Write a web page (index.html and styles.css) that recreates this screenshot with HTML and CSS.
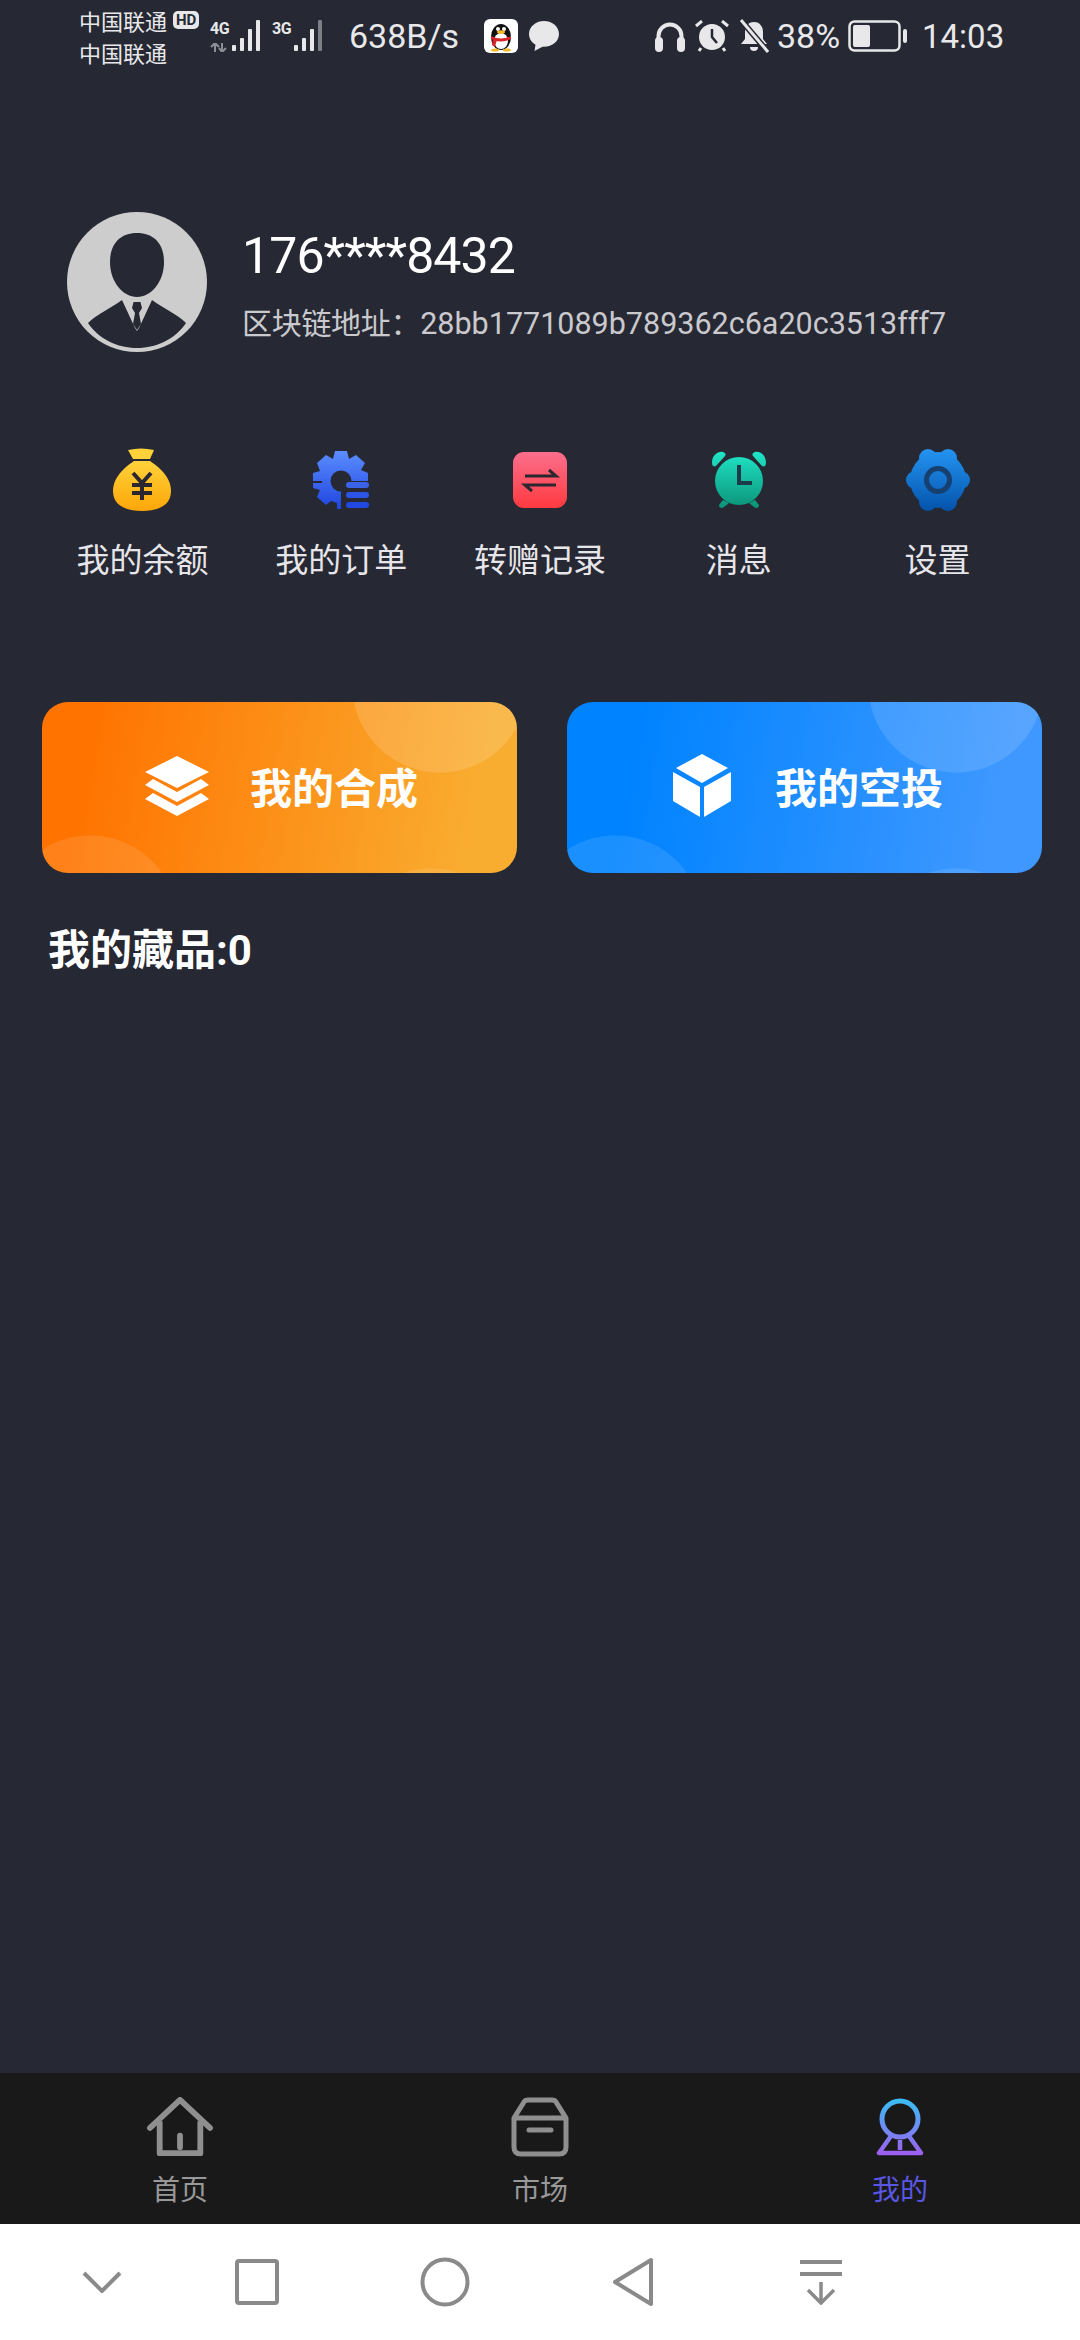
FILE: index.html
```html
<!DOCTYPE html>
<html lang="zh-CN">
<head>
    <meta charset="UTF-8">
    <meta name="viewport" content="width=device-width, initial-scale=1.0">
    <title>我的</title>
    <link rel="stylesheet" href="styles.css">
</head>
<body>
    <div class="status-bar">
        <div class="carrier">
            <div class="carrier-line">中国联通<span class="hd">HD</span></div>
            <div class="carrier-line">中国联通</div>
        </div>
        <div class="net net-4g">
            <div class="net-tag">
                <span class="net-label">4G</span>
                <svg width="18" height="9" viewBox="0 0 18 9"><path d="M5 9V1M1 4L5 0L9 4M12 0V8M9 5L12 9L16 5" fill="none" stroke="#8d8e96" stroke-width="2"/></svg>
            </div>
            <svg width="32" height="34" viewBox="0 0 32 34"><g fill="#e8e8ea"><rect x="0" y="26" width="4" height="6" rx="1"/><rect x="8" y="19" width="4" height="13" rx="1"/><rect x="16" y="10" width="4" height="22" rx="1"/><rect x="24" y="1" width="4" height="31" rx="1"/></g></svg>
        </div>
        <div class="net net-3g">
            <div class="net-tag">
                <span class="net-label">3G</span>
            </div>
            <svg width="32" height="34" viewBox="0 0 32 34"><g fill="#e8e8ea"><rect x="0" y="26" width="4" height="6" rx="1"/><rect x="8" y="19" width="4" height="13" rx="1"/><rect x="16" y="10" width="4" height="22" rx="1"/><rect x="24" y="1" width="4" height="31" rx="1" opacity="0.45"/></g></svg>
        </div>
        <span class="speed">638B/s</span>
        <svg class="qq" width="34" height="34" viewBox="0 0 34 34">
            <rect width="34" height="34" rx="6" fill="#fff"/>
            <ellipse cx="17" cy="18" rx="10" ry="13" fill="#111"/>
            <ellipse cx="17" cy="22" rx="7" ry="8" fill="#fff"/>
            <circle cx="14" cy="10" r="2" fill="#fff"/><circle cx="20" cy="10" r="2" fill="#fff"/>
            <ellipse cx="17" cy="13" rx="4" ry="1.8" fill="#f5b921"/>
            <path d="M7 17 Q17 22 27 17 L27 20 Q17 25 7 20Z M9 20 L13 20 L11 28 L8 26Z" fill="#d8232a"/>
            <ellipse cx="11" cy="31" rx="4" ry="1.6" fill="#f5b921"/><ellipse cx="23" cy="31" rx="4" ry="1.6" fill="#f5b921"/>
        </svg>
        <svg class="bubble" width="32" height="32" viewBox="0 0 32 32"><path d="M16 1C7.500 1 1 7 1 14c0 4.500 2.600 8.300 6.500 10.700L6.500 31l8-4.300c.5 0 1 .1 1.500 .1 8.500 0 15-5.700 15-12.800S24.500 1 16 1z" fill="#e8e8ea"/></svg>

        <div class="status-right">
            <svg class="s-head" width="30" height="31" viewBox="0 0 30 31"><path d="M3.500 19V15a11.500 11.500 0 0 1 23 0v4" fill="none" stroke="#e8e8ea" stroke-width="4"/><rect x="0" y="16" width="8" height="15" rx="4" fill="#e8e8ea"/><rect x="22" y="16" width="8" height="15" rx="4" fill="#e8e8ea"/></svg>
            <svg class="s-alarm" width="34" height="32" viewBox="0 0 34 32"><circle cx="17" cy="17" r="13" fill="#e8e8ea"/><path d="M17 9v8l5 6" fill="none" stroke="#262833" stroke-width="2.500"/><path d="M1 6l6-5M33 6l-6-5M6 28l-2 3M28 28l2 3" stroke="#e8e8ea" stroke-width="3" fill="none"/></svg>
            <svg class="s-bell" width="30" height="34" viewBox="0 0 30 34"><path d="M15 3c-6 0-9 5-9 10v7l-4 5h26l-4-5v-7c0-5-3-10-9-10z" fill="#e8e8ea"/><path d="M11 28a4 4 0 0 0 8 0z" fill="#e8e8ea"/><path d="M2 1l26 31" stroke="#262833" stroke-width="6"/><path d="M2 1l27 32" stroke="#e8e8ea" stroke-width="3"/></svg>
            <span class="s-pct">38%</span>
            <svg class="s-batt" width="60" height="32" viewBox="0 0 60 32"><rect x="1.500" y="1.500" width="50" height="29" rx="5" fill="none" stroke="#e8e8ea" stroke-width="2.500"/><rect x="5" y="5" width="17" height="22" rx="2" fill="#e8e8ea"/><rect x="55" y="9" width="4" height="14" rx="2" fill="#e8e8ea"/></svg>
            <span class="s-time">14:03</span>
        </div>
    </div>

    <div class="main">
        <div class="profile">
            <svg class="avatar" width="140" height="140" viewBox="0 0 140 140">
                <circle cx="70" cy="70" r="70" fill="#cdcdcd"/>
                <path d="M70 21C88 21 97 33 97 50C97 70 84 85 70 85C56 85 43 70 43 50C43 33 52 21 70 21Z" fill="#262833"/>
                <path d="M21 111C30 102 44 96 55 88L68 116L70 119L72 116L85 88C96 96 110 102 119 111C108 127 90 136 70 136C50 136 32 127 21 111Z" fill="#262833"/>
                <path d="M66.500 90H73.500L75 96L72 101L74 112L70 118L66 112L68 101L65 96Z" fill="#262833"/>
            </svg>
            <div class="profile-text">
                <div class="phone">176****8432</div>
                <div class="address">区块链地址：<span class="hash">28bb1771089b789362c6a20c3513fff7</span></div>
            </div>
        </div>

        <div class="menu">
            <div class="menu-item">
                <svg width="58" height="64" viewBox="0 0 58 64">
                    <defs><linearGradient id="bagFill" x1="0" y1="0" x2="0" y2="1"><stop offset="0" stop-color="#ffd23a"/><stop offset="1" stop-color="#fda608"/></linearGradient></defs>
                    <path d="M15 2Q28-1 41 2L37 11H20Z" fill="#ffd23a"/>
                    <path d="M21 13H37C46 19 58 29 58 43C58 57 46 63 29 63C12 63 0 57 0 43C0 29 12 19 21 13Z" fill="url(#bagFill)"/>
                    <path d="M20 25L29 35L38 25M19 37H39M19 45H39M29 35V52" fill="none" stroke="#2a2730" stroke-width="4"/>
                </svg>
                <div class="menu-label">我的余额</div>
            </div>
            <div class="menu-item">
                <svg width="56" height="58" viewBox="0 0 56 58">
                    <defs><linearGradient id="gearFill" gradientUnits="userSpaceOnUse" x1="0" y1="0" x2="0" y2="58"><stop offset="0" stop-color="#5b8dff"/><stop offset="1" stop-color="#1f45e0"/></linearGradient></defs>
                    <path d="M22 0H34L36 8L43 4L52 12L48 19L55 22V32H0V22L7 20L4 12L13 4L20 8Z M0 32V37L7 39L4 46L13 54L18 50L24 52V58H31V30H0Z" fill="url(#gearFill)"/>
                    <circle cx="28" cy="30" r="19" fill="url(#gearFill)"/>
                    <circle cx="28" cy="30" r="10.500" fill="#262833"/>
                    <rect x="28" y="30" width="28" height="28" fill="#262833"/>
                    <rect x="33" y="31" width="23" height="6" rx="3" fill="#3a63ea"/>
                    <rect x="33" y="41" width="23" height="6" rx="3" fill="#2c54e6"/>
                    <rect x="33" y="51" width="23" height="6" rx="3" fill="#2149e2"/>
                </svg>
                <div class="menu-label">我的订单</div>
            </div>
            <div class="menu-item">
                <svg width="54" height="56" viewBox="0 0 54 56">
                    <defs><linearGradient id="redFill" x1="0" y1="0" x2="0" y2="1"><stop offset="0" stop-color="#fb6f8c"/><stop offset="1" stop-color="#ff3a40"/></linearGradient></defs>
                    <rect width="54" height="56" rx="11" fill="url(#redFill)"/>
                    <path d="M12 24H43L36 18M43 33H12L19 39" fill="none" stroke="#2a2730" stroke-width="3"/>
                </svg>
                <div class="menu-label">转赠记录</div>
            </div>
            <div class="menu-item">
                <svg width="56" height="58" viewBox="0 0 56 58">
                    <defs><linearGradient id="clockFill" gradientUnits="userSpaceOnUse" x1="0" y1="0" x2="0" y2="58"><stop offset="0" stop-color="#20e6c8"/><stop offset="1" stop-color="#0b9277"/></linearGradient></defs>
                    <circle cx="28" cy="30" r="24" fill="url(#clockFill)"/>
                    <path d="M1 12C1 4 7 0 12 1C15 2 15 4 14 5L5 15C3 16 1 15 1 12Z" fill="url(#clockFill)"/>
                    <path d="M55 12C55 4 49 0 44 1C41 2 41 4 42 5L51 15C53 16 55 15 55 12Z" fill="url(#clockFill)"/>
                    <path d="M12 49L8 54C8 57 11 58 13 56L18 52ZM44 49L48 54C48 57 45 58 43 56L38 52Z" fill="url(#clockFill)"/>
                    <path d="M28 14V32H41" fill="none" stroke="#1c3a4a" stroke-width="4"/>
                </svg>
                <div class="menu-label">消息</div>
            </div>
            <div class="menu-item">
                <svg width="64" height="62" viewBox="0 0 64 62">
                    <defs><linearGradient id="cogFill" gradientUnits="userSpaceOnUse" x1="0" y1="0" x2="0" y2="62"><stop offset="0" stop-color="#2494f2"/><stop offset="1" stop-color="#0453aa"/></linearGradient></defs>
                    <circle cx="32" cy="31" r="28" fill="url(#cogFill)"/>
                    <g fill="url(#cogFill)">
                        <circle cx="22" cy="9" r="9"/><circle cx="42" cy="9" r="9"/>
                        <circle cx="9" cy="31" r="9"/><circle cx="55" cy="31" r="9"/>
                        <circle cx="22" cy="53" r="9"/><circle cx="42" cy="53" r="9"/>
                    </g>
                    <circle cx="32" cy="31" r="11.500" fill="none" stroke="#15406f" stroke-width="5"/>
                </svg>
                <div class="menu-label">设置</div>
            </div>
        </div>

        <div class="cards">
            <div class="card card-orange">
                <svg width="66" height="60" viewBox="0 0 66 60">
                    <path d="M33 0L65 16L33 32L1 16Z" fill="#fff"/>
                    <path d="M9 23L1 29L33 46L65 29L57 23L33 36Z" fill="#fff"/>
                    <path d="M9 37L1 43L33 60L65 43L57 37L33 50Z" fill="#fff"/>
                </svg>
                <span>我的合成</span>
            </div>
            <div class="card card-blue">
                <svg width="66" height="64" viewBox="0 0 66 64">
                    <path d="M33 0L59 14L33 29L7 14Z" fill="#fff"/>
                    <path d="M4 18L31 33V63L4 47Z" fill="#fff"/>
                    <path d="M62 18L35 33V63L62 47Z" fill="#fff"/>
                </svg>
                <span>我的空投</span>
            </div>
        </div>

        <div class="collection-title">我的藏品:0</div>
    </div>

    <div class="tabbar">
        <div class="tab">
            <svg width="68" height="62" viewBox="0 0 68 62">
                <path d="M3 32L34 3L65 32" fill="none" stroke="#8f8f8f" stroke-width="6" stroke-linecap="round" stroke-linejoin="round"/>
                <path d="M13 25V58H55V25" fill="none" stroke="#8f8f8f" stroke-width="6" stroke-linejoin="round"/>
                <path d="M34 40V52" stroke="#8f8f8f" stroke-width="6" stroke-linecap="round"/>
            </svg>
            <div class="tab-label">首页</div>
        </div>
        <div class="tab">
            <svg width="58" height="60" viewBox="0 0 58 60">
                <path d="M3 21V50Q3 57 10 57H48Q55 57 55 50V21L45 5Q44 3 41 3H17Q14 3 13 5ZM3 21H55" fill="none" stroke="#8f8f8f" stroke-width="5" stroke-linejoin="round"/>
                <path d="M18 33H40" stroke="#8f8f8f" stroke-width="5" stroke-linecap="round"/>
            </svg>
            <div class="tab-label">市场</div>
        </div>
        <div class="tab tab-active">
            <svg width="48" height="58" viewBox="0 0 48 58">
                <defs><linearGradient id="meStroke" gradientUnits="userSpaceOnUse" x1="0" y1="0" x2="0" y2="58"><stop offset="0" stop-color="#37c1f5"/><stop offset="1" stop-color="#a05cf0"/></linearGradient></defs>
                <circle cx="24" cy="21" r="18" fill="none" stroke="url(#meStroke)" stroke-width="5"/>
                <path d="M15 38L3 55H45L33 38" fill="none" stroke="url(#meStroke)" stroke-width="4.500" stroke-linejoin="round"/>
                <path d="M24 42V52" stroke="url(#meStroke)" stroke-width="4.500"/>
            </svg>
            <div class="tab-label">我的</div>
        </div>
    </div>

    <div class="system-nav">
        <svg class="nav-down" width="40" height="22" viewBox="0 0 40 22"><path d="M2 2L20 20L38 2" fill="none" stroke="#8a8a8a" stroke-width="4"/></svg>
        <svg class="nav-square" width="44" height="46" viewBox="0 0 44 46"><rect x="2" y="2" width="40" height="42" rx="2" fill="none" stroke="#8a8a8a" stroke-width="4"/></svg>
        <svg class="nav-circle" width="50" height="50" viewBox="0 0 50 50"><circle cx="25" cy="25" r="22.500" fill="none" stroke="#8a8a8a" stroke-width="4"/></svg>
        <svg class="nav-back" width="42" height="50" viewBox="0 0 42 50"><path d="M39 3V47L3 25Z" fill="none" stroke="#8a8a8a" stroke-width="4" stroke-linejoin="round"/></svg>
        <svg class="nav-drop" width="42" height="46" viewBox="0 0 42 46"><path d="M0 3H42M0 15H42" stroke="#8a8a8a" stroke-width="4"/><path d="M21 23V44M8 31L21 44L34 31" fill="none" stroke="#8a8a8a" stroke-width="3.500"/></svg>
    </div>
</body>
</html>
```

FILE: styles.css
```css
* { margin: 0; padding: 0; box-sizing: border-box; }
body { width: 1080px; height: 2340px; display: flex; flex-direction: column; background: #262833; color: #fff; font-family: Roboto, "Noto Sans CJK SC", sans-serif; overflow: hidden; }
svg { display: block; flex-shrink: 0; }

/* status bar */
.status-bar { height: 70px; display: flex; align-items: center; color: #e8e8ea; padding: 2px 0 0 79px; }
.carrier { width: 126px; font-size: 22px; line-height: 32px; font-family: "Noto Sans CJK SC", sans-serif; }
.carrier-line { display: flex; align-items: center; white-space: nowrap; }
.hd { margin-left: 6px; background: #e8e8ea; color: #262833; font: 700 15px/18px Roboto, sans-serif; padding: 0 3px; border-radius: 5px; }
.net { display: flex; align-items: flex-start; }
.net-tag { width: 22px; display: flex; flex-direction: column; gap: 6px; margin-top: 1px; }
.net-label { font: 700 16px/17px Roboto, sans-serif; letter-spacing: -0.5px; }
.net-4g { margin-left: 5px; width: 62px; }
.net-3g { width: 58px; }
.speed { font-size: 34px; margin-left: 19px; width: 135px; }
.bubble { margin-left: 10px; }
.status-right { display: flex; align-items: center; margin-left: 95px; }
.s-alarm { margin-left: 10px; }
.s-bell { margin-left: 10px; }
.s-pct { font-size: 34px; margin-left: 8px; width: 71px; }
.s-time { font-size: 33px; margin-left: 14px; }

/* main area */
.main { flex: 1; }
.profile { display: flex; align-items: center; gap: 35px; padding-left: 67px; margin-top: 142px; }
.profile-text { padding-top: 6px; }
.phone { font-size: 50px; line-height: 60px; letter-spacing: -0.9px; }
.address { font-size: 30px; line-height: 40px; margin-top: 18px; color: #c9c9ce; white-space: nowrap; letter-spacing: -0.3px; }
.hash { font-size: 30.5px; letter-spacing: 0; }

.menu { display: grid; grid-template-columns: repeat(5, 1fr); padding: 0 43px; margin-top: 96px; }
.menu-item { display: flex; flex-direction: column; align-items: center; }
.menu-item svg { height: 64px; }
.menu-label { font-size: 33px; line-height: 44px; margin-top: 27px; color: #e6e6ea; white-space: nowrap; }

.cards { display: grid; grid-template-columns: 475px 475px; column-gap: 50px; padding-left: 42px; margin-top: 119px; }
.card { height: 171px; border-radius: 26px; display: flex; align-items: center; justify-content: center; gap: 40px; padding: 0 0 4px 3px; font-size: 42px; font-weight: 700; }
.card-orange { background:
    radial-gradient(circle 88px at 398px -17px, rgba(255,255,255,0.14) 99%, transparent 100%),
    radial-gradient(circle 88px at 48px 221px, rgba(255,255,255,0.1) 99%, transparent 100%),
    radial-gradient(circle 88px at 389px 254px, rgba(255,255,255,0.1) 99%, transparent 100%),
    linear-gradient(100deg, #ff7300 10%, #f9ad30 90%); }
.card-blue { background:
    radial-gradient(circle 88px at 389px -17px, rgba(255,255,255,0.12) 99%, transparent 100%),
    radial-gradient(circle 88px at 48px 221px, rgba(255,255,255,0.1) 99%, transparent 100%),
    radial-gradient(circle 88px at 389px 254px, rgba(255,255,255,0.1) 99%, transparent 100%),
    linear-gradient(100deg, #0083ff 15%, #3f98ff 90%); }

.collection-title { font-size: 42px; font-weight: 700; line-height: 56px; margin-top: 50px; padding-left: 48px; }

/* tab bar */
.tabbar { height: 151px; background: #191919; display: grid; grid-template-columns: repeat(3, 360px); }
.tab { display: flex; flex-direction: column; align-items: center; padding-top: 24px; color: #999; }
.tab svg { height: 60px; }
.tab-label { font-size: 28px; line-height: 36px; margin-top: 16px; }
.tab-active { color: #5a56e4; }

/* system navigation */
.system-nav { height: 116px; background: #fff; display: flex; align-items: center; padding-left: 82px; }
.nav-square { margin-left: 113px; }
.nav-circle { margin-left: 141px; }
.nav-back { margin-left: 142px; }
.nav-drop { margin-left: 146px; }
```
